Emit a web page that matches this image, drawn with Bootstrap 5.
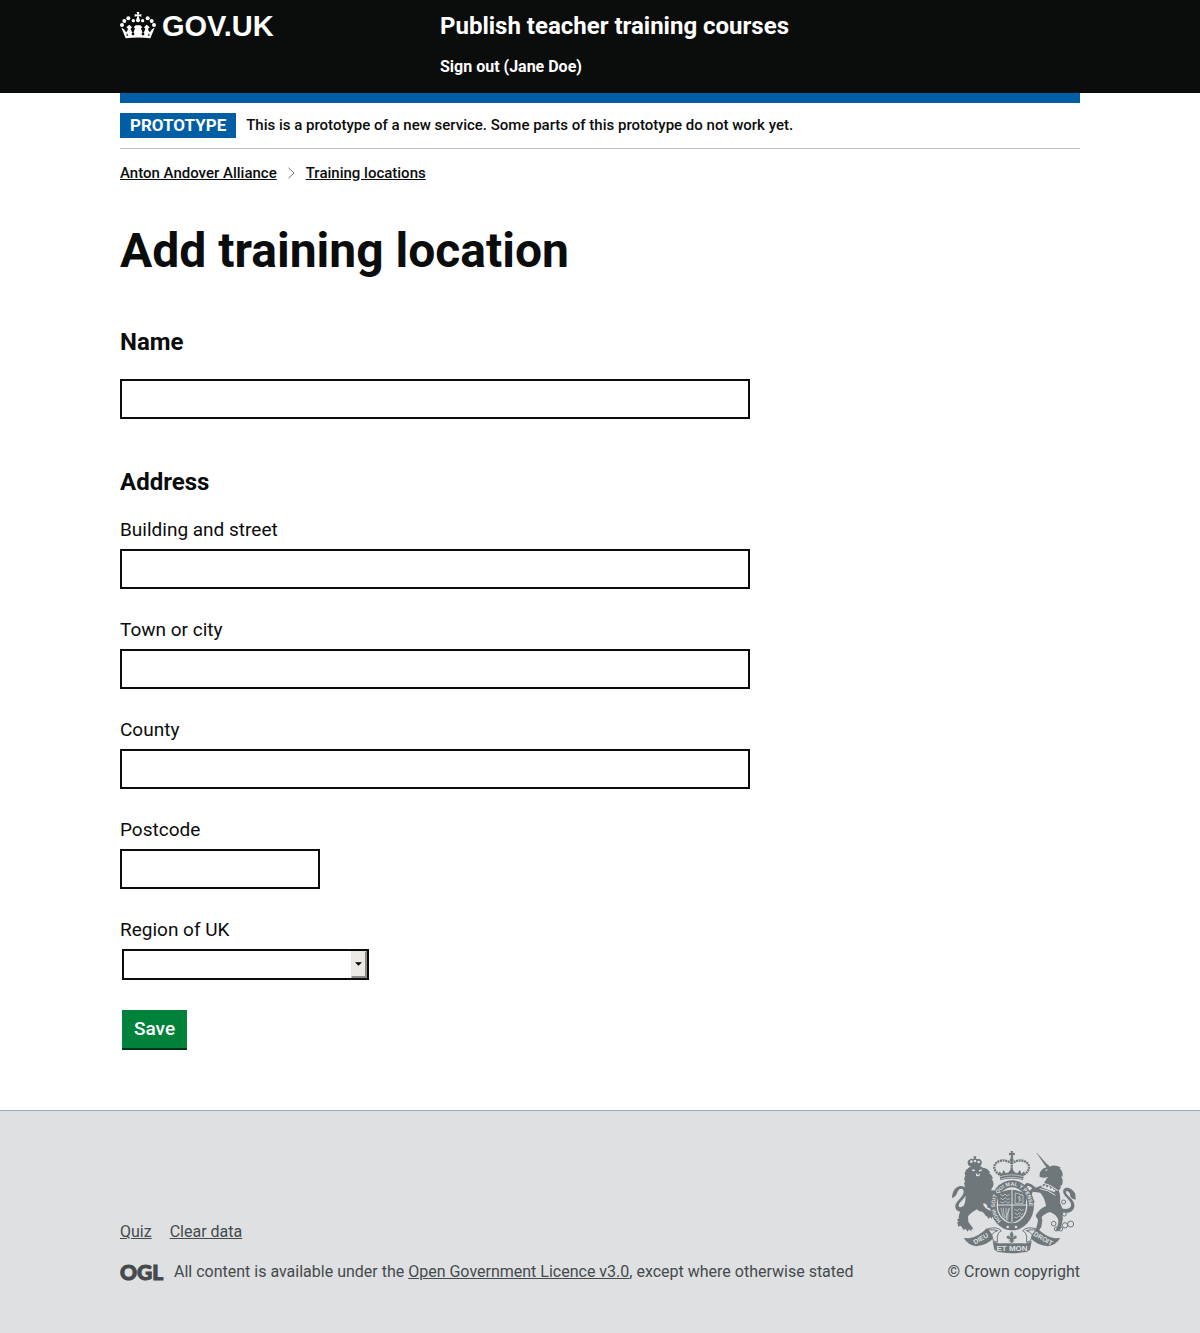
<!DOCTYPE html>
<html lang="en">
<head>
<meta charset="utf-8">
<meta name="viewport" content="width=device-width, initial-scale=1">
<title>Add training location - Publish teacher training courses - GOV.UK</title>
<link href="https://cdn.jsdelivr.net/npm/bootstrap@5.3.0/dist/css/bootstrap.min.css" rel="stylesheet">
<style>
  body { font-family: Roboto, Arial, sans-serif; font-size: 16px; line-height: 20px; color: #0b0c0c; background: #dee0e2; }
  a, a:hover { color: inherit; }
  .page-width { max-width: 960px; }
  .site-header { background: #0b0c0c; color: #fff; padding: 10px 0 16px; font-weight: 700; }
  .wordmark { font-family: "Liberation Sans", Arial, sans-serif; font-size: 29px; line-height: 32px; gap: 6px; }
  .service-name { font-size: 24px; line-height: 32px; margin-bottom: 15px; }
  .page-body { background: #fff; padding-bottom: 60px; }
  .blue-bar { height: 10px; background: #005ea5; }
  .phase { padding: 10px 0; border-bottom: 1px solid #bfc1c3; gap: 10px; font-size: 15px; line-height: 25px; font-weight: 500; }
  .phase-tag { background: #005ea5; color: #fff; font-size: 17px; font-weight: 700; padding: 0 10px; }
  .crumbs { gap: 11px; margin: 14px 0 43px; font-size: 15px; font-weight: 500; }
  h1 { font-size: 48px; line-height: 50px; font-weight: 700; margin-bottom: 51px; }
  .section-title { font-size: 24px; line-height: 30px; font-weight: 700; margin-bottom: 20px; }
  .name-box { margin: 22px 0 48px; }
  .form-area { max-width: 630px; }
  .field { margin-bottom: 28px; }
  .field-label { display: block; font-size: 19px; line-height: 25px; margin-bottom: 7px; }
  .field-box { height: 40px; border: 2px solid #0b0c0c; border-radius: 0; background: #fff; font-size: 19px; padding: 4px; }
  .postcode { max-width: 200px; }
  .region { width: 247px; margin: 0 2px; }
  .region-select { appearance: none; height: 31px; border: 2px solid #0b0c0c; background: #fff; font-size: 19px; padding: 0 20px 0 4px; }
  .region-arrow { top: 2px; right: 2px; bottom: 2px; width: 16px; background: #edeae5; border: solid; border-width: 1px 2px 2px 1px; border-color: #e4e4e4 #8a8a8a #8a8a8a #e4e4e4; pointer-events: none; }
  .save-btn { margin: 30px 2px 2px; padding: 6px 12px 7px; background: #00823b; color: #fff; font-size: 19px; line-height: 25px; font-weight: 500; border: 0; border-radius: 0; box-shadow: 0 2px 0 #003618; }
  .save-btn:hover { background: #006b31; color: #fff; }
  .site-footer { border-top: 1px solid #a1acb2; color: #454a4c; padding: 39px 0 51px; }
  .footer-links { gap: 18px; margin-bottom: 20px; }
  .licence { gap: 13px; }
  .ogl-mark { margin: -6px 0; }
  .ogl-text { font: 900 21px Lato, Arial, sans-serif; fill: #454a4c; stroke: #454a4c; stroke-width: 1; }
  .motto { font: 700 24px "Liberation Sans", Arial, sans-serif; fill: #dee0e2; }
  .motto-side { font-size: 20px; }
  .garter { font: 700 16px "Liberation Sans", Arial, sans-serif; fill: #dee0e2; }
</style>
<script src="https://cdn.jsdelivr.net/npm/bootstrap@5.3.0/dist/js/bootstrap.bundle.min.js"></script>
</head>
<body>
<header class="site-header">
  <div class="container page-width px-sm-0">
    <div class="row g-0">
      <div class="col-md-4">
        <a href="#" class="wordmark d-inline-flex align-items-center text-decoration-none">
          <svg width="36" height="28" viewBox="0 0 108 84" fill="#fff" aria-hidden="true">
            <path d="M50 0h8l-2 8 8-2v8l-8-2 2 9h-8l2-9-8 2V6l8 2z"/>
            <circle cx="54" cy="25" r="6"/>
            <circle cx="40" cy="26" r="5"/><circle cx="68" cy="26" r="5"/>
            <circle cx="25" cy="19" r="6"/><circle cx="83" cy="19" r="6"/>
            <circle cx="13" cy="27" r="6"/><circle cx="95" cy="27" r="6"/>
            <circle cx="6" cy="39" r="6"/><circle cx="102" cy="39" r="6"/>
            <path d="M4 47c7 2 10 6 13 12h4l3-9-5-4 9-8 8 8-4 4 4 11h5l4-12-4-3 6-6h14l6 6-4 3 4 12h5l4-11-4-4 8-8 9 8-5 4 3 9h4c3-6 6-10 13-12L91 79c-24-3-50-3-74 0z"/>
            <path d="M34 66l5-7 5 7-5 5zM64 66l5-7 5 7-5 5zM20 64l5 6-5 2zM88 64l-5 6 5 2z" fill="#0b0c0c"/>
          </svg>
          <span>GOV.UK</span>
        </a>
      </div>
      <div class="col-md-8">
        <div class="service-name"><a href="#" class="text-decoration-none">Publish teacher training courses</a></div>
        <a href="#" class="d-block text-decoration-none">Sign out (Jane Doe)</a>
      </div>
    </div>
  </div>
</header>

<div class="page-body">
  <div class="container page-width px-sm-0">
    <div class="blue-bar"></div>
    <div class="phase d-flex align-items-center">
      <strong class="phase-tag">PROTOTYPE</strong>
      <span>This is a prototype of a new service. Some parts of this prototype do not work yet.</span>
    </div>
    <nav class="crumbs d-flex align-items-center" aria-label="Breadcrumb">
      <a href="#">Anton Andover Alliance</a>
      <svg width="7" height="12" viewBox="0 0 7 12" fill="none" stroke="#6f777b" aria-hidden="true"><path d="M.5.8 6 6 .5 11.2"/></svg>
      <a href="#">Training locations</a>
    </nav>
    <main>
      <h1>Add training location</h1>
      <form class="form-area">
        <label class="section-title d-block mb-0" for="name">Name</label>
        <input class="field-box name-box form-control" id="name" type="text">
        <fieldset>
          <legend class="section-title">Address</legend>
          <div class="field">
            <label class="field-label" for="street">Building and street</label>
            <input class="field-box form-control" id="street" type="text">
          </div>
          <div class="field">
            <label class="field-label" for="town">Town or city</label>
            <input class="field-box form-control" id="town" type="text">
          </div>
          <div class="field">
            <label class="field-label" for="county">County</label>
            <input class="field-box form-control" id="county" type="text">
          </div>
          <div class="field">
            <label class="field-label" for="postcode">Postcode</label>
            <input class="field-box form-control postcode" id="postcode" type="text">
          </div>
          <label class="field-label" for="region">Region of UK</label>
          <div class="region position-relative">
            <select class="region-select w-100 d-block" id="region"><option></option></select>
            <span class="region-arrow position-absolute d-flex align-items-center justify-content-center">
              <svg width="7" height="4" viewBox="0 0 8 4" aria-hidden="true"><path d="M0 0h8L4 4z"/></svg>
            </span>
          </div>
        </fieldset>
        <button class="btn save-btn d-block" type="button">Save</button>
      </form>
    </main>
  </div>
</div>

<footer class="site-footer">
  <div class="container page-width px-sm-0">
    <div class="d-flex flex-wrap justify-content-between align-items-end">
      <div>
        <div class="footer-links d-flex"><a href="#">Quiz</a><a href="#">Clear data</a></div>
        <div class="licence d-flex align-items-center">
          <svg class="ogl-mark flex-shrink-0" width="41" height="32" viewBox="0 0 41 32" overflow="visible" role="img" aria-label="Open Government Licence">
            <text class="ogl-text" x="0" y="24">OGL</text>
          </svg>
          <span>All content is available under the <a href="#">Open Government Licence v3.0</a>, except where otherwise stated</span>
        </div>
      </div>
      <div class="text-center">
        <svg class="d-block mx-auto mb-2" width="126" height="104" viewBox="36 30 378 312" fill="#6f777b" aria-hidden="true">
          <!-- lion -->
          <path d="M90 78c-5-8-6-16 1-19 3-3 7-3 10-1l4-3-2-6h9l-2 6 5 3c5-2 10 0 12 4 3 5 1 11-3 16z"/>
          <g fill="#dee0e2"><circle cx="97" cy="65" r="4"/><circle cx="108" cy="63" r="4"/><circle cx="119" cy="66" r="4"/></g>
          <path d="M92 81c10-6 28-6 41 3 9 0 18 7 20 14l-3 2c8 5 12 12 11 17l-4-2c7 9 7 16 6 22-8 10-9 23-6 33l-5 2c2 9-1 18-7 23-4-4-8-5-13-4 2 8 8 14 16 18 10 4 15 11 19 19l-3 6-4-5-2 8-5-6-5 6-3-7c-7-3-10-11-14-14-8-2-11-1-17-8-11 5-20 13-27 21l1 16c6 10 13 14 15 24l-5-3-1 8-7-6-4 7-6-8-7 3c-1-5-4-9-9-13l-7 3c1-7-2-10-3-13l5-1-5-7 5-3c0-15 5-26 14-36 8-14 6-25 7-39-3-13-1-21-5-32l4-3c-5-6-3-14 0-19l-2-7 4-10z"/>
          <path d="M144 170l14-20 12 4-11 24c-7 11-8 17-10 22l-10-10zM142 190l24 0 12 8-3 9-10 1-19-5z"/>
          <path d="M86 205c-20 19-40 8-37-9 3-15 24-24 25-41 0-9-7-11-13-7-8 7-5 21-22 26 1-16 6-32 24-36 14-1 22 8 20 20-3 19-24 26-24 39 1 8 14 5 22-7z"/>
          <path fill="#dee0e2" d="M99 88l10 2-3 4-7-2zM119 91l10-3-1 4-7 3zM111 98l5 7 7-5-2 9-10-1z"/>
          <!-- unicorn -->
          <path d="M293 38l36 40-6 5-30-43z"/>
          <path d="M321 83l5-10 6 7c10-6 27-3 34 4l-4 1c8 8 11 17 8 26l-4-2c7 12 6 20 2 28l-4-3c3 9 1 12-5 17 6 15 5 26 4 37 6 12 11 25 7 39l2 7c-3 14-4 22-7 33l-7 7-8-4c5-10 9-18 8-30-3-10-12-19-25-24-10 3-18 8-25 15l2 10-3 20-8 11-9-2c3-10 6-20 7-31l-7-11c7-16 19-25 31-30-2-17-7-27-17-40l-23-3-4 14 10 16-5 6-13-15-2-11c-2-4-1-8 3-10l10-11-12-7-8 5-3-8 7-6 13 5 14 10c8-3 18-6 22-10 4-9 10-17 15-23-11 5-18 4-26 0-2-11 3-19 13-26z"/>
          <path d="M366 205c29 7 37-9 25-23-9-12-23-20-17-34 7-11 28-3 35 14l1 17c-12-2-17-7-17-17-5-10-12-11-12-5 0 11 29 22 25 43-4 18-24 23-41 13z"/>
          <g fill="none" stroke="#dee0e2" stroke-width="3"><path d="M307 128q26 4 50 24M302 146q26 3 47 20"/></g>
          <path fill="#dee0e2" d="M318 90l8-2-3 5zM309 132l5 8 5-7 5 10 6-7 5 11 6-6 3 10 6-4-3 10-40-15z"/>
          <g fill="none" stroke="#6f777b" stroke-width="3"><circle cx="374" cy="186" r="6"/><circle cx="376" cy="222" r="6"/><circle cx="344" cy="251" r="7"/><circle cx="352" cy="267" r="6"/><circle cx="365" cy="267" r="6"/><circle cx="378" cy="256" r="8"/><circle cx="395" cy="252" r="9"/></g>
          <!-- royal crown -->
          <path d="M215 33h7l-1 6 6-1v8l-6-1 2 10h-8l1-10-6 1v-8l6 1z"/>
          <circle cx="218" cy="60" r="6"/>
          <path fill="none" stroke="#6f777b" stroke-width="7" stroke-dasharray="6 2" d="M182 104C144 82 180 44 218 70M254 104c38-22 2-60-36-34M218 66v30"/>
          <path d="M180 94l9 7 4-11 8 10 8-3 9-14 9 14 8 3 8-10 4 11 9-7-4 27q-34-11-68 0z"/>
          <path fill="none" stroke="#dee0e2" stroke-width="2" d="M183 110q35-11 70 0M185 117q34-10 66 0"/>
          <!-- garter and shield -->
          <ellipse cx="219" cy="196" rx="66" ry="75"/>
          <ellipse cx="219" cy="196" rx="46" ry="54" fill="#dee0e2"/>
          <path id="garter-arc" fill="none" d="M187 242A51 59 0 1 1 251 242"/>
          <text class="garter"><textPath href="#garter-arc" startOffset="0">HONI SOIT QUI MAL Y PENSE</textPath></text>
          <path d="M177 162q42-25 84 0v38q-2 36-42 49-40-13-42-49z"/>
          <g fill="none" stroke="#dee0e2" stroke-width="3"><path d="M219 147v100M177 195h84"/><path stroke-width="2" d="M184 163l8 5 6-6 6 6 8-5M184 175l9 4 6-6 7 6 7-4M184 186l9 3 6-6 7 6 7-3M227 219l8 5 6-6 6 6 5-4M225 231l8 3 7-7 7 5M226 208l9 4 6-6 7 6 6-4M229 159l23 6v25h-24zM239 168l5 8-5 10M246 166l-8 8 9 9M186 204l6 27M193 203l3 34M201 203l1 38M208 205l-2 35M213 203l-13 31"/></g>
          <circle cx="206" cy="261" r="4" fill="#dee0e2"/><circle cx="231" cy="261" r="4" fill="#dee0e2"/>
          <!-- motto scroll -->
          <path d="M74 294l16 1q28-4 54-31l22 28q-21 24-55 27-24-4-37-25zM364 294l-16 1q-28-4-54-31l-22 28q21 24 55 27 24-4 37-25z"/>
          <path d="M148 266q26-7 39 6-9 4-12 16v19l-12-5-5-18q8-9 18-12-13-4-28-2zM290 266q-26-7-39 6 9 4 12 16v19l12-5 5-18q-8-9-18-12 13-4 28-2z" fill="#dee0e2" stroke="#6f777b" stroke-width="3"/>
          <path d="M161 303q14 9 26 7h65q12 2 26-7l-5 26q-8 8-20 8-34 6-67 0-12 0-20-8z"/>
          <text class="motto" text-anchor="middle" x="219" y="333">ET MON</text>
          <text class="motto motto-side" transform="rotate(-30 128 294)" text-anchor="middle" x="125" y="301">DIEU</text>
          <text class="motto motto-side" transform="rotate(30 310 294)" text-anchor="middle" x="313" y="301">DROIT</text>
          <!-- fleur-de-lis -->
          <path d="M218 273q9 9 4 20 3-10 11-5 3 7-5 9l-6 3 7 3-7 2-1 5h-6l-1-5-7-2 7-3-6-3q-8-2-5-9 8-5 11 5-5-11 4-20z" stroke="#dee0e2" stroke-width="1"/>
        </svg>
        <a href="#" class="text-decoration-none">© Crown copyright</a>
      </div>
    </div>
  </div>
</footer>
</body>
</html>
